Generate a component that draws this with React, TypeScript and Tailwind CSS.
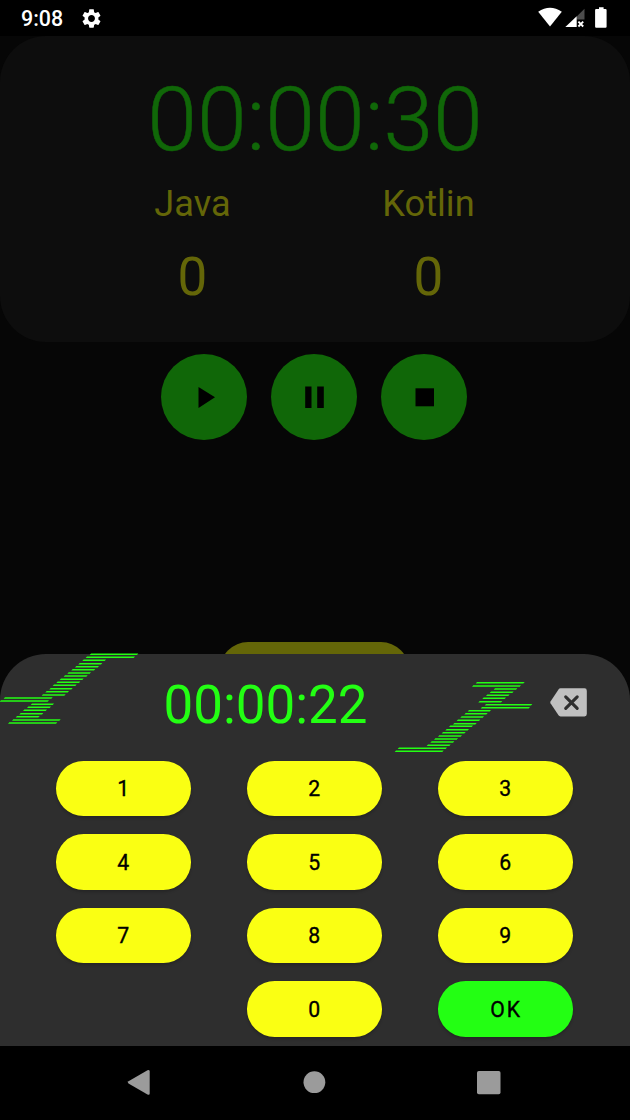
type Stripe = [number, number, number];

const LEFT_BOLT: Stripe[] = [
  [270, 414, 43], [258, 404, 52], [248, 317, 61], [236, 306, 71], [226, 296, 80], [215, 285, 89],
  [203, 272, 99], [192, 262, 108], [180, 250, 118], [170, 240, 127], [159, 229, 136], [149, 217, 146],
  [137, 206, 155], [126, 196, 165], [12, 157, 174], [0, 146, 183], [93, 161, 193], [82, 152, 202],
  [70, 140, 211], [59, 129, 221], [48, 118, 230], [37, 181, 240], [25, 171, 249],
];

const RIGHT_BOLT: Stripe[] = [
  [288, 433, 67], [277, 422, 77], [342, 411, 86], [330, 400, 96], [319, 388, 105], [308, 377, 114],
  [296, 366, 124], [315, 456, 133], [303, 449, 142], [264, 332, 151], [254, 322, 160], [242, 311, 170],
  [231, 300, 180], [220, 289, 190], [208, 278, 198], [197, 266, 208], [186, 256, 217], [175, 245, 227],
  [163, 233, 236], [152, 222, 245], [141, 211, 255], [54, 200, 264], [45, 190, 273],
];

function Bolt({ stripes, viewBox, className }: { stripes: Stripe[]; viewBox: string; className: string }) {
  return (
    <svg viewBox={viewBox} className={className} fill="#23ff13">
      {stripes.map(([a, b, y]) => (
        <path key={y} d={`M${a + 3} ${y - 2.2}H${b + 1}L${b - 3} ${y + 2.2}H${a - 1}Z`} />
      ))}
    </svg>
  );
}

function StatusBar() {
  return (
    <header className="flex h-9 items-center bg-black pl-[21px] text-white">
      <span className="pt-px text-[21.4px] leading-9 font-medium">9:08</span>
      <svg viewBox="0 0 24 24" className="ml-[17px] h-[23px] w-[23px]" fill="currentColor">
        <path d="M19.14 12.94c.04-.3.06-.61.06-.94 0-.32-.02-.64-.07-.94l2.03-1.58c.18-.14.23-.41.12-.61l-1.92-3.32c-.12-.22-.37-.29-.59-.22l-2.39.96c-.5-.38-1.03-.7-1.62-.94l-.36-2.54c-.04-.24-.24-.41-.48-.41h-3.84c-.24 0-.43.17-.47.41l-.36 2.54c-.59.24-1.13.57-1.62.94l-2.39-.96c-.22-.08-.47 0-.59.22L2.74 8.87c-.12.21-.08.47.12.61l2.03 1.58c-.05.3-.09.63-.09.94s.02.64.07.94l-2.03 1.58c-.18.14-.23.41-.12.61l1.92 3.32c.12.22.37.29.59.22l2.39-.96c.5.38 1.03.7 1.62.94l.36 2.54c.05.24.24.41.48.41h3.84c.24 0 .44-.17.47-.41l.36-2.54c.59-.24 1.13-.56 1.62-.94l2.39.96c.22.08.47 0 .59-.22l1.92-3.32c.12-.22.07-.47-.12-.61l-2.01-1.58zM12 15.6c-1.98 0-3.6-1.62-3.6-3.6s1.62-3.6 3.6-3.6 3.6 1.62 3.6 3.6-1.62 3.6-3.6 3.6z" />
      </svg>
      <svg viewBox="0 0 92 36" className="ml-auto h-9 w-[92px]" fill="currentColor">
        <path d="M.2 11.7Q12 3.8 23.8 11.7L12 26.4Z" />
        <path d="M46.5 8.7V19.5H38.7V16.5Z" fill="#4d4d4d" />
        <path d="M38.7 16.2V27H27.3Z" />
        <path d="M40.4 21.7L45.2 26.5M45.2 21.7L40.4 26.5" stroke="currentColor" strokeWidth="1.9" />
        <path d="M61 7.3h4.6v1.6h1.9q1.1 0 1.1 1.1v16.7q0 1.1-1.1 1.1h-9.3q-1.1 0-1.1-1.1V10q0-1.1 1.1-1.1H61Z" />
      </svg>
    </header>
  );
}

function Score({ name, value }: { name: string; value: number }) {
  return (
    <div className="flex w-[236px] flex-col items-center text-[#646608]">
      <span className="text-[36.2px] leading-[44px]">{name}</span>
      <span className="mt-[19px] text-[53px] leading-[64px]">{value}</span>
    </div>
  );
}

function RoundButton({ label, d }: { label: string; d: string }) {
  return (
    <button aria-label={label} className="h-[86px] w-[86px] rounded-full bg-[#106708]">
      <svg viewBox="0 0 86 86" className="h-full w-full" fill="#000">
        <path d={d} />
      </svg>
    </button>
  );
}

function Key({ label }: { label: string }) {
  return (
    <button
      className={
        "h-[55.5px] w-[135px] rounded-[27.75px] pt-[2px] pl-px text-[21.2px] tracking-[1.7px] text-black [-webkit-text-stroke:0.35px_#000] shadow-[0_2px_3px_rgba(0,0,0,0.2)] " +
        (label === "OK" ? "col-start-3 bg-[#23ff13]" : label === "0" ? "col-start-2 bg-[#faff13]" : "bg-[#faff13]")
      }
    >
      {label}
    </button>
  );
}

export default function App() {
  return (
    <div className="flex h-[1120px] w-[630px] flex-col overflow-hidden bg-black font-[Roboto,sans-serif]">
      <StatusBar />
      <main className="flex h-[618px] flex-col items-center bg-[#060606]">
        <section className="flex h-[306px] w-full flex-col items-center rounded-[46px] bg-[#0d0d0d]">
          <div className="mt-[30px] text-[89.5px] leading-[108px] font-light text-[#106708] [-webkit-text-stroke:0.5px_#106708]">
            00:00:30
          </div>
          <div className="mt-[8px] flex pr-[9px]">
            <Score name="Java" value={0} />
            <Score name="Kotlin" value={0} />
          </div>
        </section>
        <div className="mt-3 flex gap-6 pr-[2px]">
          <RoundButton label="Start" d="M37.5 33L54 43.3L37.5 54Z" />
          <RoundButton label="Pause" d="M44.2 32.5h0ZM34.2 32.5h6.3v21.5h-6.3ZM46.2 32.5h6.6v21.5h-6.6Z" />
          <RoundButton label="Stop" d="M34.5 34.3h18.5v18h-18.5Z" />
        </div>
        <div className="mt-auto mr-px h-[12.5px] w-[189px] overflow-hidden">
          <div className="h-[56px] rounded-[28px] bg-[#646608]" />
        </div>
      </main>
      <div className="h-[392px] bg-[#060606]">
        <section className="h-full rounded-t-[46px] bg-[#2e2e2e]">
          <div className="flex h-[106.5px] items-start">
            <Bolt stripes={LEFT_BOLT} viewBox="0 39 420 216" className="-mt-px h-[72px] w-[140px]" />
            <div className="ml-[23.5px] mt-[20px] w-[204px] text-[52.9px] leading-[62px] whitespace-nowrap text-[#23ff13]">
              00:00:22
            </div>
            <Bolt stripes={RIGHT_BOLT} viewBox="42 62 417 216" className="ml-[26.5px] mt-[26.5px] h-[72px] w-[139px]" />
            <button aria-label="Delete digit" className="mt-[34px] ml-[17px]">
              <svg viewBox="0 0 37 29" className="h-[29px] w-[37px]">
                <path
                  d="M10.5 .3H34.5Q36.8.3 36.8 2.7V26Q36.8 28.4 34.5 28.4H10.5Q9.3 28.4 8.5 27.3L.5 15.3Q0 14.4.5 13.4L8.5 1.4Q9.3.3 10.5.3Z"
                  fill="#c0c0c0"
                />
                <path d="M15.7 8.8L27.2 20.3M27.2 8.8L15.7 20.3" stroke="#2e2e2e" strokeWidth="3.1" strokeLinecap="round" />
              </svg>
            </button>
          </div>
          <div className="grid grid-cols-[135px_135px_135px] gap-x-14 gap-y-[18px] pl-14">
            {["1", "2", "3", "4", "5", "6", "7", "8", "9", "0", "OK"].map((label) => (
              <Key key={label} label={label} />
            ))}
          </div>
        </section>
      </div>
      <nav className="h-[74px] bg-black">
        <svg viewBox="0 0 630 74" className="h-[74px] w-[630px]" fill="#9b9b9b">
          <path d="M128.5 35.3L147.5 24.2Q149.7 23.5 149.7 25.5V47.5Q149.7 49.4 147.5 48.6L128.5 37.5Q127 36.4 128.5 35.3Z" />
          <circle cx="314.4" cy="36.2" r="10.9" />
          <rect x="477" y="25" width="23.5" height="23.2" rx="1.8" />
        </svg>
      </nav>
    </div>
  );
}
